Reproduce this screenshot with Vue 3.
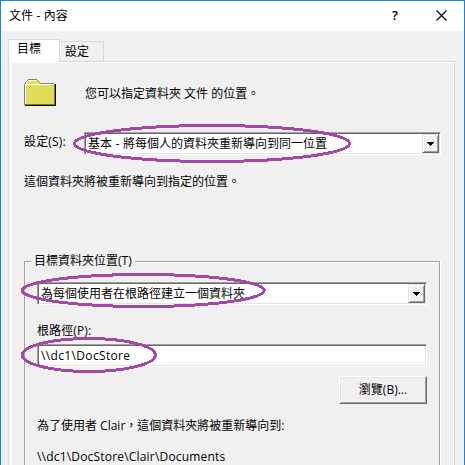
<script setup>
import { ref } from 'vue'

const tabs = ['目標', '設定']
const active = ref(0)

// alternating pixels of the folder's two-colour dither
let dither = ''
for (let y = 1; y < 26; y++) {
  for (let x = y < 5 ? 3 : 2; x < (y < 5 ? 13 : 30); x++) {
    if ((x + y) % 2) dither += `M${x} ${y}h1v1h-1z`
  }
}
</script>

<template>
  <div class="dialog">
    <header class="titlebar">
      <span class="title">文件 - 內容</span>
      <span class="help">?</span>
      <svg class="close" width="11" height="11" viewBox="0 0 11 11"><path d="M.5 .5 10.5 10.5M10.5 .5 .5 10.5" /></svg>
    </header>
    <nav class="tabs">
      <div v-for="(t, i) in tabs" :key="t" class="tab" :class="{ active: i === active }" @click="active = i">{{ t }}</div>
    </nav>
    <main class="panel">
      <div class="intro">
        <svg class="folder" width="33" height="28" viewBox="0 0 33 28" shape-rendering="crispEdges">
          <path d="M1 4h1V3h1V2h1V1h9v1h1v1h1v1h1v1h14v21H1z" fill="#f4f000" />
          <path :d="dither" fill="#c9c9b8" />
          <path d="M0 5h1v21H0zM1 3h1v2H1zM2 2h1v1H2zM3 1h1v1H3zM4 0h9v1H4zM13 1h1v1h-1zM14 2h1v1h-1zM15 3h1v1h-1zM16 4h14v1H16z" fill="#808080" />
          <path d="M1 5h1v20H1zM2 5h28v1H2zM4 1h9v1H4zM3 2h1v1H3zM2 3h1v1H2z" fill="#fff" />
          <path d="M30 5h1v21H1v-1h29z" fill="#808000" />
          <path d="M31 5h1v22H1v-1h30z" fill="#000" />
        </svg>
        <span>您可以指定資料夾 文件 的位置。</span>
      </div>
      <div class="setting">
        <label>設定(S):</label>
        <div class="field combo main-combo">
          <span>基本 - 將每個人的資料夾重新導向到同一位置</span>
          <button class="drop"><svg width="7" height="4" viewBox="0 0 7 4" shape-rendering="crispEdges"><path d="M0 0h7v1H6v1H5v1H4v1H3V3H2V2H1V1H0z" /></svg></button>
        </div>
      </div>
      <p class="note">這個資料夾將被重新導向到指定的位置。</p>
      <section class="group">
        <h2 class="legend">目標資料夾位置(T)</h2>
        <div class="field combo">
          <span>為每個使用者在根路徑建立一個資料夾</span>
          <button class="drop"><svg width="7" height="4" viewBox="0 0 7 4" shape-rendering="crispEdges"><path d="M0 0h7v1H6v1H5v1H4v1H3V3H2V2H1V1H0z" /></svg></button>
        </div>
        <label class="path-label">根路徑(P):</label>
        <div class="field path"><span>\\dc1\DocStore</span></div>
        <button class="browse">瀏覽(B)...</button>
        <p class="result">為了使用者 Clair，這個資料夾將被重新導向到:</p>
        <p class="result-path">\\dc1\DocStore\Clair\Documents</p>
      </section>
    </main>
    <svg class="marks" width="465" height="465" viewBox="0 0 465 465" shape-rendering="crispEdges">
      <ellipse cx="212" cy="143.500" rx="137.500" ry="18" />
      <ellipse cx="143.300" cy="290.500" rx="121" ry="16" />
      <ellipse cx="88.800" cy="355" rx="66.500" ry="16.500" />
    </svg>
  </div>
</template>

<style>
body { margin: 0; overflow: hidden; }
</style>

<style scoped>
* { box-sizing: border-box; }
.dialog {
  position: relative;
  width: 465px;
  height: 465px;
  overflow: hidden;
  border: 1px solid #1883d7;
  border-bottom: 0;
  background: #f0f0f0;
  color: #000;
  font: 400 12px/16px "Open Sans", "Noto Sans CJK TC", sans-serif;
  white-space: pre;
}
p, h2 { margin: 0; font: inherit; }
.titlebar {
  display: flex;
  align-items: flex-start;
  height: 30px;
  padding: 7px 17px 0 8px;
  background: #fff;
}
.title { flex: 1; word-spacing: .3px; }
.help { width: 8px; margin-right: 36px; font-size: 13px; font-weight: 600; line-height: 15px; }
.close { margin-top: 2px; stroke: #000; stroke-width: 1.1; }
.tabs {
  position: relative;
  z-index: 1;
  display: flex;
  align-items: flex-end;
  height: 31px;
  margin-bottom: -1px;
  padding-left: 7px;
}
.tab {
  width: 44px;
  height: 21px;
  padding: 2px 0 0 5px;
  border: 1px solid #d9d9d9;
  border-left: 0;
}
.tab.active {
  width: 52px;
  height: 23px;
  padding: 1px 0 0 8px;
  border-left: 1px solid #d9d9d9;
  border-bottom: 0;
  background: #fff;
}
.panel {
  width: 447px;
  height: 410px;
  margin-left: 7px;
  padding: 0 12px 0 12px;
  border: 1px solid #d9d9d9;
  border-bottom: 0;
  box-shadow: inset 3px 0 #fff, inset -1px 1px #fff;
}
.intro {
  display: flex;
  gap: 28px;
  height: 70px;
  padding: 17px 0 0 3px;
}
.intro span { padding-top: 7px; }
.setting {
  display: flex;
  justify-content: space-between;
  height: 23px;
  padding-left: 3px;
}
.setting label { padding-top: 2px; letter-spacing: .15px; }
.field {
  display: flex;
  justify-content: space-between;
  height: 23px;
  border: 1px solid;
  border-color: #a0a0a0 #fff #fff #a0a0a0;
  background: #fff;
  box-shadow: inset 1px 1px #696969, inset -1px -1px #e3e3e3;
}
.field > span { padding: 3px 0 0 3px; }
.combo { padding-right: 1px; }
.main-combo { width: 357px; margin-right: 1px; word-spacing: .5px; }
.drop, .browse {
  border: 1px solid;
  border-color: #e3e3e3 #696969 #696969 #e3e3e3;
  background: #f0f0f0;
  box-shadow: inset 1px 1px #fff, inset -1px -1px #a0a0a0;
  color: #000;
  font: inherit;
}
.drop {
  display: flex;
  align-items: center;
  justify-content: center;
  width: 17px;
  height: 19px;
  margin-top: 1px;
  padding: 0;
}
.note { padding: 19px 0 0 3px; }
.group {
  display: flex;
  flex-direction: column;
  width: 416px;
  height: 220px;
  margin: 71px 0 0 3px;
  padding: 0 12px;
  border: 1px solid #a0a0a0;
  border-bottom: 0;
  box-shadow: 1px 0 #fff, inset 1px 1px #fff;
}
.legend {
  align-self: flex-start;
  height: 16px;
  margin: -9px 0 13px -6px;
  padding: 0 3px;
  background: #f0f0f0;
}
.path-label { margin-top: 18px; letter-spacing: .1px; }
.path { margin-top: 5px; letter-spacing: .35px; }
.browse {
  align-self: flex-end;
  width: 88px;
  height: 28px;
  margin-top: 9px;
  padding: 0;
  border-color: #fff #696969 #696969 #fff;
  box-shadow: inset 1px 1px #e3e3e3, inset -1px -1px #a0a0a0;
}
.result { margin-top: 14px; }
.result-path { margin-top: 15px; letter-spacing: .19px; }
.marks { position: absolute; left: -1px; top: -1px; }
.marks ellipse { fill: none; stroke: #a349a4; stroke-width: 3; }
</style>
